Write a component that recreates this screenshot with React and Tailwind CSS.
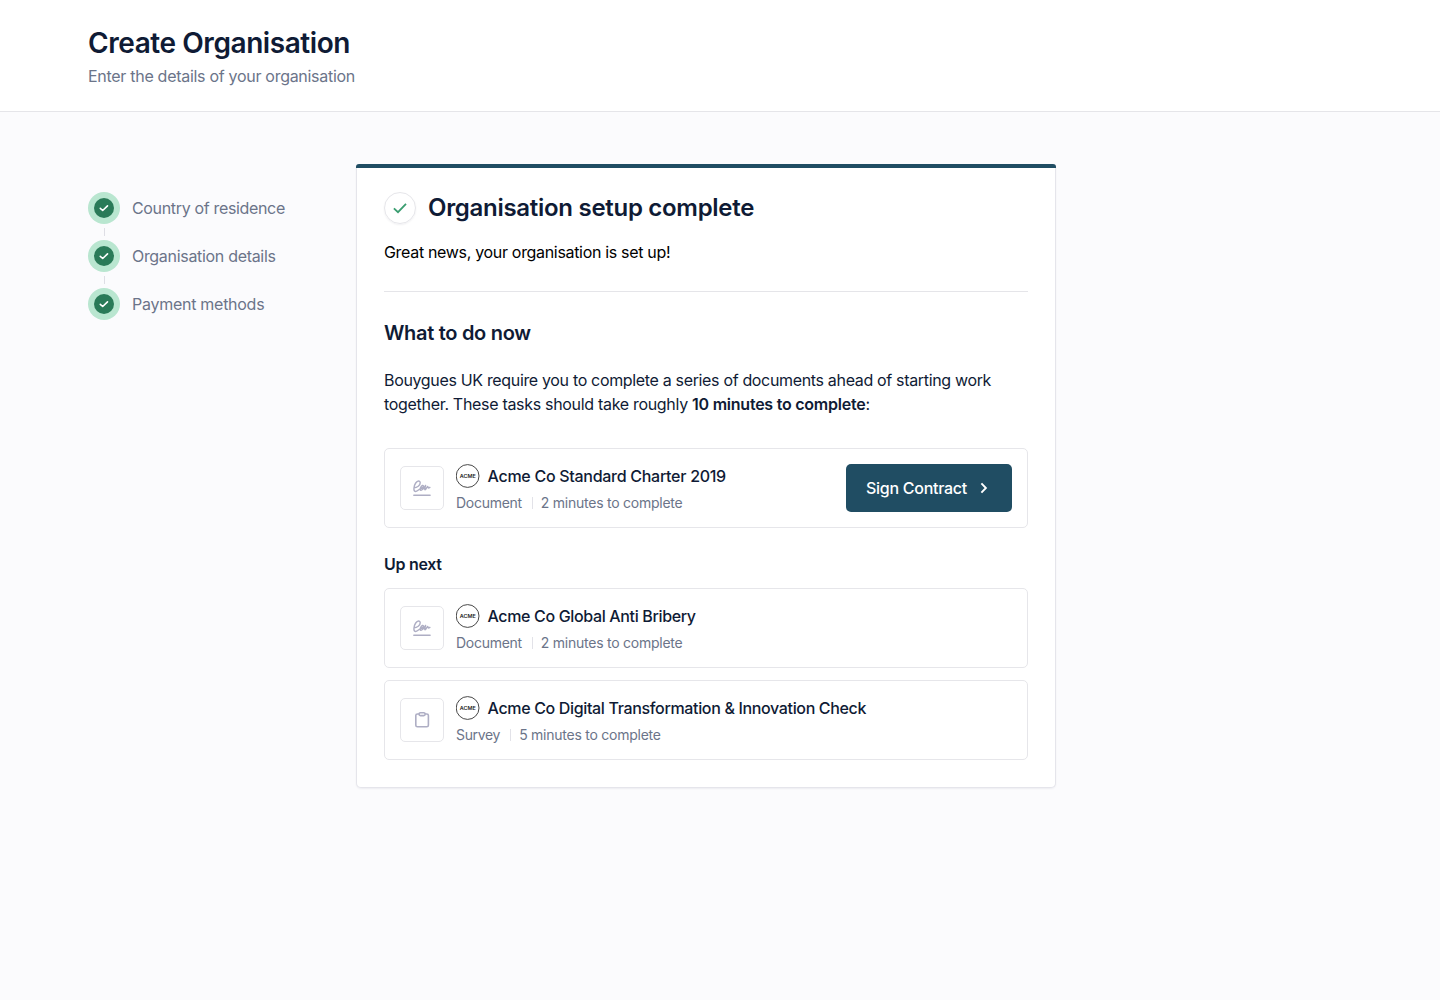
const steps = [
  { label: "Country of residence", tracking: "tracking-[-0.34px]" },
  { label: "Organisation details", tracking: "tracking-[-0.31px]" },
  { label: "Payment methods", tracking: "tracking-[-0.27px]" },
];

function SignatureIcon() {
  return (
    <svg width="20" height="20" viewBox="0 0 20 20" fill="none" stroke="#aeaec4" strokeWidth="1.4" strokeLinecap="round" strokeLinejoin="round">
      <path d="M1.8 17.2H18.1" />
      <path d="M2 9.8C5 9.8 8.3 7.3 8.2 4.7C8.1 2.3 5.4 2.5 3.7 5C1.8 7.8 1.2 12.7 3 13.4C4.8 14 6.8 11.2 8.6 10.6C10.4 10.2 12 8.6 11.3 7.6C10.4 6.6 8.2 9.2 8.2 11.2C8.2 13.6 11.4 11.6 13.6 7.4C12.9 9.4 12.4 11.8 13.1 11.8C14 11.8 14.9 8.4 15.7 8.5C16.4 8.7 15.3 11 17.9 9.4" />
    </svg>
  );
}

function ClipboardIcon() {
  return (
    <svg width="20" height="20" viewBox="0 0 20 20" fill="none" stroke="#aeaec4" strokeWidth="1.6" strokeLinejoin="round">
      <rect x="3.8" y="4" width="12.6" height="12.8" rx="1.6" />
      <rect x="7.1" y="2.8" width="6" height="2.8" rx="1.3" fill="white" />
    </svg>
  );
}

function AcmeLogo() {
  return (
    <svg width="24" height="24" viewBox="0 0 24 24" className="shrink-0">
      <circle cx="11.6" cy="12" r="11.4" fill="white" stroke="#333" strokeWidth="0.9" />
      <text x="11.8" y="13.7" textAnchor="middle" textLength="16" lengthAdjust="spacingAndGlyphs" fontSize="4.6" fontWeight="600" fill="#222" fontFamily="Inter, sans-serif">
        ACME
      </text>
    </svg>
  );
}

function Task({ icon, title, type, time, typeClass, titleClass, children }) {
  return (
    <div className="flex h-20 items-center rounded-[5px] border border-[#e6e6ea] px-[15px]">
      <div className="flex size-11 shrink-0 items-center justify-center rounded-[5px] border border-[#e6e6ea]">{icon}</div>
      <div className="ml-3 flex-1">
        <div className="flex h-6 items-center">
          <AcmeLogo />
          <span className={`ml-[7.5px] text-base leading-6 font-medium whitespace-nowrap ${titleClass}`}>{title}</span>
        </div>
        <div className="mt-[5px] flex h-5 items-center text-sm leading-5 text-[#6b7489]">
          <span className={typeClass}>{type}</span>
          <span className="ml-[10px] h-3 w-px bg-[#e2e2e8]" />
          <span className="ml-2 tracking-[-0.245px]">{time}</span>
        </div>
      </div>
      {children}
    </div>
  );
}

export default function App() {
  return (
    <div className="min-h-screen bg-[#fbfbfd] font-['Inter',sans-serif] text-[#0f1b35]">
      <header className="h-28 border-b border-[#e5e5e9] bg-white pt-[25px] pl-[88px]">
        <h1 className="text-[28px] leading-9 font-semibold tracking-[-0.43px]">Create Organisation</h1>
        <p className="mt-[3px] text-base leading-6 tracking-[-0.29px] text-[#6b7489]">Enter the details of your organisation</p>
      </header>
      <main className="flex items-start pt-[52px] pl-[88px]">
        <ol className="w-[268px] pt-7">
          {steps.map((step, i) => (
            <li key={step.label}>
              {i > 0 && (
                <div className="flex h-4 w-[33px] items-center justify-center">
                  <span className="h-2 w-px bg-[#dedee5]" />
                </div>
              )}
              <div className="flex h-8 items-center">
                <span className="flex size-8 items-center justify-center rounded-full bg-[#b9e6d0]">
                  <span className="flex size-5 items-center justify-center rounded-full bg-[#2a7a58]">
                    <svg width="12" height="12" viewBox="0 0 12 12" fill="none" stroke="white" strokeWidth="1.6" strokeLinecap="round" strokeLinejoin="round">
                      <path d="M2.3 6.4L4.7 8.5L9.5 3.9" />
                    </svg>
                  </span>
                </span>
                <span className={`ml-3 text-base leading-6 text-[#6b7489] ${step.tracking}`}>{step.label}</span>
              </div>
            </li>
          ))}
        </ol>
        <section className="h-[624px] w-[700px] rounded-t-[3px] rounded-b-[5px] border border-t-0 border-[#e5e5eb] bg-white px-[27px] shadow-[0_1px_2px_rgba(20,20,50,0.06)]">
          <div className="-mx-7 mb-6 h-1 rounded-t-[3px] bg-[#204d63]" />
          <div className="flex items-center">
            <span className="flex size-8 items-center justify-center rounded-full border border-[#e6e6ea] shadow-[0_1px_2px_rgba(20,20,50,0.06)]">
              <svg width="16" height="16" viewBox="0 0 16 16" fill="none" stroke="#3a9d70" strokeWidth="1.8">
                <path d="M1.9 8.3L6 12.2L14 3.9" />
              </svg>
            </span>
            <h2 className="ml-3 text-2xl leading-8 font-semibold tracking-[-0.29px]">Organisation setup complete</h2>
          </div>
          <p className="mt-4 text-base leading-6 tracking-[-0.32px] text-black">Great news, your organisation is set up!</p>
          <hr className="mt-[27px] border-[#e5e5e9]" />
          <h3 className="mt-[27px] text-xl leading-7 font-semibold tracking-[-0.3px]">What to do now</h3>
          <p className="mt-[21px] text-base leading-6 tracking-[-0.335px]">
            Bouygues UK require you to complete a series of documents ahead of starting work
            <br />
            <span className="tracking-[-0.31px]">together. These tasks should take roughly </span>
            <strong className="font-semibold tracking-[-0.24px]">10 minutes to complete</strong>:
          </p>
          <div className="mt-8">
            <Task icon={<SignatureIcon />} title="Acme Co Standard Charter 2019" type="Document" time="2 minutes to complete" titleClass="tracking-[-0.28px]" typeClass="tracking-[-0.28px]">
              <button className="flex h-12 w-[166px] items-center rounded-[5px] bg-[#204d63] pl-5 text-base font-medium tracking-[-0.27px] text-white">
                Sign Contract
                <svg className="ml-[10px]" width="14" height="14" viewBox="0 0 14 14" fill="none" stroke="currentColor" strokeWidth="1.9">
                  <path d="M4.4 2.4L8.9 7L4.4 11.6" />
                </svg>
              </button>
            </Task>
          </div>
          <h4 className="mt-6 text-base leading-6 font-semibold tracking-[-0.3px]">Up next</h4>
          <div className="mt-3 flex flex-col gap-3">
            <Task icon={<SignatureIcon />} title="Acme Co Global Anti Bribery" type="Document" time="2 minutes to complete" titleClass="tracking-[-0.35px]" typeClass="tracking-[-0.28px]" />
            <Task icon={<ClipboardIcon />} title="Acme Co Digital Transformation & Innovation Check" type="Survey" time="5 minutes to complete" titleClass="tracking-[-0.34px]" typeClass="tracking-[-0.33px]" />
          </div>
        </section>
      </main>
    </div>
  );
}
